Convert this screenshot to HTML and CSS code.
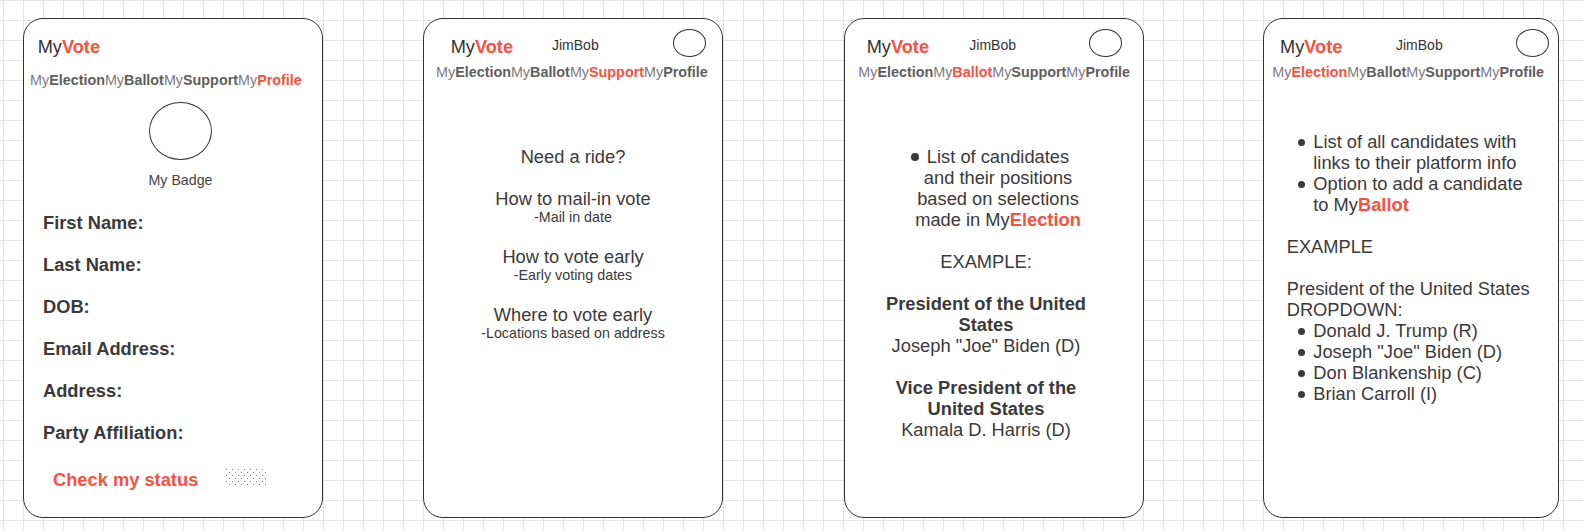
FILE: index.html
```html
<!DOCTYPE html>
<html lang="en">
<head>
<meta charset="utf-8">
<title>MyVote wireframes</title>
<link rel="stylesheet" href="styles.css">
</head>
<body>
<div class="board">

  <section class="phone phone--profile">
    <header class="phone-top">
      <div class="logo">My<b>Vote</b></div>
    </header>
    <nav class="tabs">My<b>Election</b>My<b>Ballot</b>My<b>Support</b>My<b class="on">Profile</b></nav>
    <div class="badge">
      <div class="badge-circle"></div>
      <div class="badge-label">My Badge</div>
    </div>
    <ul class="fields">
      <li>First Name:</li>
      <li>Last Name:</li>
      <li>DOB:</li>
      <li>Email Address:</li>
      <li>Address:</li>
      <li>Party Affiliation:</li>
    </ul>
    <div class="status">
      <span class="status-link">Check my status</span>
      <svg class="status-dots" width="42" height="17" viewBox="0 0 42 17" aria-hidden="true">
        <defs>
          <pattern id="dots" width="6" height="6" patternUnits="userSpaceOnUse">
            <rect x="0" y="0" width="1" height="1" fill="#ff4a38"/>
            <rect x="3" y="3" width="1" height="1" fill="#ff4a38"/>
          </pattern>
        </defs>
        <rect x="0" y="0" width="42" height="17" fill="url(#dots)"/>
      </svg>
    </div>
  </section>

  <section class="phone phone--support">
    <header class="phone-top">
      <div class="logo">My<b>Vote</b></div>
      <div class="user">JimBob</div>
      <div class="avatar"></div>
    </header>
    <nav class="tabs">My<b>Election</b>My<b>Ballot</b>My<b class="on">Support</b>My<b>Profile</b></nav>
    <div class="help">
      <p class="help-lead">Need a ride?</p>
      <div class="help-item">
        <p class="help-title">How to mail-in vote</p>
        <p class="help-note">-Mail in date</p>
      </div>
      <div class="help-item">
        <p class="help-title">How to vote early</p>
        <p class="help-note">-Early voting dates</p>
      </div>
      <div class="help-item">
        <p class="help-title">Where to vote early</p>
        <p class="help-note">-Locations based on address</p>
      </div>
    </div>
  </section>

  <section class="phone phone--ballot">
    <header class="phone-top">
      <div class="logo">My<b>Vote</b></div>
      <div class="user">JimBob</div>
      <div class="avatar"></div>
    </header>
    <nav class="tabs">My<b>Election</b>My<b class="on">Ballot</b>My<b>Support</b>My<b>Profile</b></nav>
    <div class="ballot">
      <p class="ballot-list"><span class="dot"></span>List of candidates<br>and their positions<br>based on selections<br>made in My<b class="hl">Election</b></p>
      <p>EXAMPLE:</p>
      <p><b>President of the United<br>States</b><br>Joseph "Joe" Biden (D)</p>
      <p><b>Vice President of the<br>United States</b><br>Kamala D. Harris (D)</p>
    </div>
  </section>

  <section class="phone phone--election">
    <header class="phone-top">
      <div class="logo">My<b>Vote</b></div>
      <div class="user">JimBob</div>
      <div class="avatar"></div>
    </header>
    <nav class="tabs">My<b class="on">Election</b>My<b>Ballot</b>My<b>Support</b>My<b>Profile</b></nav>
    <div class="race">
      <ul class="bullets">
        <li>List of all candidates with<br>links to their platform info</li>
        <li>Option to add a candidate<br>to My<b class="hl">Ballot</b></li>
      </ul>
      <p class="race-example">EXAMPLE</p>
      <p class="race-office">President of the United States<br>DROPDOWN:</p>
      <ul class="bullets">
        <li>Donald J. Trump (R)</li>
        <li>Joseph "Joe" Biden (D)</li>
        <li>Don Blankenship (C)</li>
        <li>Brian Carroll (I)</li>
      </ul>
    </div>
  </section>

</div>
</body>
</html>
```
FILE: styles.css
```css
* {
  box-sizing: border-box;
}

html,
body {
  margin: 0;
  padding: 0;
}

body {
  width: 1583px;
  height: 531px;
  overflow: hidden;
  background-color: #ffffff;
  background-image:
    linear-gradient(to right, #e4e4e4 1px, transparent 1px),
    linear-gradient(to bottom, #e4e4e4 1px, transparent 1px);
  background-size: 20px 20px;
  background-position: 3px 0;
  font-family: "Liberation Sans", Arial, sans-serif;
  color: #3a3a3a;
}

.board {
  display: flex;
  align-items: flex-start;
  padding: 18px 0 0 23px;
}

/* ---------- phone card ---------- */

.phone {
  flex: none;
  display: flex;
  flex-direction: column;
  width: 300px;
  height: 500px;
  border: 1px solid #333333;
  border-radius: 20px;
  background: #ffffff;
  --logo-x: 14px;
  --name-x: 128px;
  --avatar-x: 249px;
  --nav-x: 12px;
}

.phone--profile {
  --logo-x: 13.7px;
  --name-x: 200px;
  --nav-x: 6px;
}

.phone--support {
  margin-left: 100px;
  --logo-x: 26.7px;
  --name-x: 128px;
  --avatar-x: 249px;
  --nav-x: 12px;
}

.phone--ballot {
  margin-left: 121px;
  --logo-x: 21.7px;
  --name-x: 124.3px;
  --avatar-x: 244.3px;
  --nav-x: 13.3px;
}

.phone--election {
  margin-left: 119px;
  width: 296px;
  --logo-x: 16px;
  --name-x: 132px;
  --avatar-x: 252px;
  --nav-x: 8.3px;
}

/* ---------- header ---------- */

.phone-top {
  display: flex;
  align-items: flex-start;
  height: 39px;
  flex: none;
}

.logo {
  flex: none;
  margin: 18px 0 0 var(--logo-x);
  width: calc(var(--name-x) - var(--logo-x));
  font-size: 18.2px;
  line-height: 21px;
  color: #333333;
  white-space: nowrap;
}

.logo b {
  color: #fd4f3e;
}

.user {
  flex: none;
  margin-top: 18px;
  width: calc(var(--avatar-x) - var(--name-x));
  font-size: 14px;
  line-height: 17px;
  color: #333333;
}

.avatar {
  flex: none;
  margin-top: 10.3px;
  width: 33px;
  height: 28px;
  border: 1px solid #333333;
  border-radius: 50%;
}

.tabs {
  flex: none;
  margin-top: 6px;
  padding-left: var(--nav-x);
  font-size: 14.35px;
  line-height: 17px;
  color: #7c7c7c;
  white-space: nowrap;
}

.tabs b {
  color: #5e5e5e;
}

.tabs b.on {
  color: #fd4f3e;
}

.phone--profile .tabs {
  margin-top: 13.5px;
}

.hl {
  color: #fd4f3e;
}

/* ---------- profile ---------- */

.badge {
  display: flex;
  flex-direction: column;
  align-items: center;
  margin-top: 13.8px;
  padding-left: 15px;
}

.badge-circle {
  width: 62.4px;
  height: 58px;
  border: 1px solid #333333;
  border-radius: 50%;
}

.badge-label {
  margin-top: 12px;
  font-size: 14.2px;
  line-height: 17px;
  color: #444444;
}

.fields {
  list-style: none;
  margin: 22.3px 0 0;
  padding: 0 0 0 19px;
}

.fields li {
  margin-bottom: 21px;
  font-size: 18.3px;
  font-weight: bold;
  line-height: 21px;
}

.fields li:last-child {
  margin-bottom: 0;
}

.status {
  display: flex;
  align-items: flex-start;
  margin-top: 26.7px;
  padding-left: 29px;
}

.status-link {
  font-size: 18.3px;
  font-weight: bold;
  line-height: 21px;
  color: #fd4f3e;
}

.status-dots {
  display: block;
  margin-left: 28px;
}

/* ---------- support ---------- */

.help {
  margin-top: 64.5px;
  text-align: center;
}

.help p {
  margin: 0;
}

.help-lead {
  margin-bottom: 21px !important;
  font-size: 18.3px;
  line-height: 21px;
}

.help-item {
  margin-bottom: 20px;
}

.help-title {
  font-size: 18.3px;
  line-height: 21px;
}

.help-note {
  font-size: 14.3px;
  line-height: 17px;
}

/* ---------- ballot ---------- */

.ballot {
  margin-top: 64.8px;
  padding: 0 24px 0 8px;
  text-align: center;
  font-size: 18.3px;
  line-height: 21px;
}

.ballot p {
  margin: 0 0 21px;
}

.ballot-list {
  padding-left: 24px;
}

.dot {
  display: inline-block;
  width: 7.6px;
  height: 7.6px;
  margin: 0 8px 0 -15.6px;
  border-radius: 50%;
  background: #3a3a3a;
  vertical-align: 2px;
}

/* ---------- election ---------- */

.race {
  margin-top: 49.5px;
  padding-left: 22.7px;
  font-size: 18.3px;
  line-height: 21px;
}

.race p {
  margin: 0;
}

.race-example {
  margin-bottom: 21px !important;
}

.bullets {
  list-style: none;
  margin: 0 0 21px;
  padding-left: 26.6px;
}

.bullets li::before {
  content: "";
  display: inline-block;
  width: 7px;
  height: 7px;
  margin: 0 8px 0 -15px;
  border-radius: 50%;
  background: #3a3a3a;
  vertical-align: 2px;
}
```
